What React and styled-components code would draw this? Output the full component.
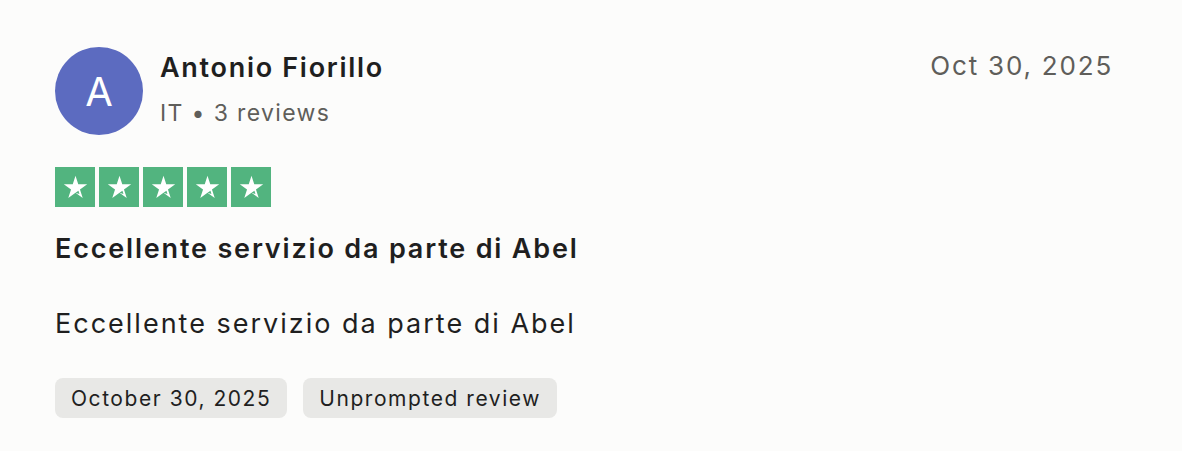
import styled, { createGlobalStyle } from 'styled-components';

const Global = createGlobalStyle`
    body {
        margin: 0;
        background: #fcfcfb;
        font-family: Inter, "Noto Sans", sans-serif;
        color: #1f1f1f;
    }
`;

const Star = () => (
    <StarBox>
        <svg width="27" height="27" viewBox="0 0 24 24">
            <path d="M12 1.6l2.45 7.55h7.95l-6.43 4.67 2.45 7.55L12 16.7l-6.42 4.67 2.45-7.55L1.6 9.15h7.95z" fill="#fff" />
            <path d="M14.6 14.9l0.9 2.8L12 16.7z" fill="#52b47f" />
        </svg>
    </StarBox>
);

export default function App() {
    return (
        <>
            <Global />
            <Card>
                <Header>
                    <Avatar>A</Avatar>
                    <Who>
                        <Name>Antonio Fiorillo</Name>
                        <Meta>IT • 3 reviews</Meta>
                    </Who>
                    <Date>Oct 30, 2025</Date>
                </Header>
                <Stars>
                    {[0, 1, 2, 3, 4].map(i => <Star key={i} />)}
                </Stars>
                <Title>Eccellente servizio da parte di Abel</Title>
                <Body>Eccellente servizio da parte di Abel</Body>
                <Tags>
                    <Tag>October 30, 2025</Tag>
                    <Tag>Unprompted review</Tag>
                </Tags>
            </Card>
        </>
    )
}

const Card = styled.div`
    padding: 47px 69px 0 55px;
    display: flex;
    flex-direction: column;
`;

const Header = styled.div`
    display: flex;
    align-items: flex-start;
`;

const Avatar = styled.div`
    width: 88px;
    height: 88px;
    border-radius: 50%;
    background: #5c6bc0;
    color: #fff;
    font-size: 40px;
    display: flex;
    align-items: center;
    justify-content: center;
    flex-shrink: 0;
`;

const Who = styled.div`
    margin-left: 17px;
    display: flex;
    flex-direction: column;
    flex: 1;
    padding-top: 3px;
`;

const Name = styled.div`
    font-size: 27px;
    font-weight: 600;
    line-height: 36px;
    letter-spacing: 1.7px;
`;

const Meta = styled.div`
    font-size: 23px;
    line-height: 32px;
    margin-top: 11px;
    color: #5f5e5a;
    letter-spacing: 1.35px;
`;

const Date = styled.div`
    font-size: 26px;
    line-height: 36px;
    color: #5f5e5a;
    padding-top: 1px;
    letter-spacing: 1.8px;
`;

const Stars = styled.div`
    display: flex;
    gap: 4px;
    margin-top: 32px;
`;

const StarBox = styled.div`
    width: 40px;
    height: 40px;
    background: #52b47f;
    display: flex;
    align-items: center;
    justify-content: center;
`;

const Title = styled.div`
    font-size: 27px;
    font-weight: 600;
    line-height: 32px;
    margin-top: 26px;
    letter-spacing: 1.82px;
`;

const Body = styled.div`
    font-size: 27px;
    line-height: 32px;
    margin-top: 43px;
    letter-spacing: 2px;
`;

const Tags = styled.div`
    display: flex;
    gap: 16px;
    margin-top: 38px;
`;

const Tag = styled.div`
    background: #e8e8e6;
    border-radius: 8px;
    height: 40px;
    padding: 0 16px;
    display: flex;
    align-items: center;
    font-size: 21px;
    letter-spacing: 1.55px;
`;
